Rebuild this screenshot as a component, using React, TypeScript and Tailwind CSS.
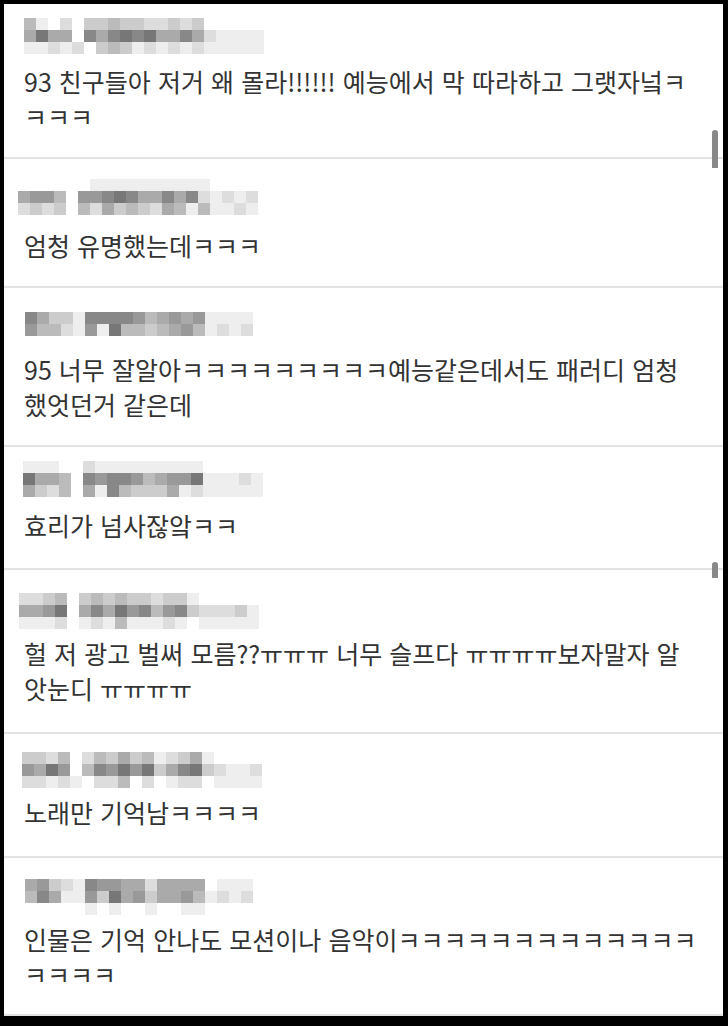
const GRAYS = [
  "#ffffff",
  "#eeeeee",
  "#dddddd",
  "#cccccc",
  "#bbbbbb",
  "#aaaaaa",
  "#999999",
  "#888888",
  "#777777",
  "#666666",
];

type Comment = {
  id: number;
  x: number;
  rows: string[];
  lines: string[];
  wrap: string;
  gap: string;
};

const comments: Comment[] = [
  {
    id: 1,
    x: 20,
    rows: ["41020334332232300000", "58550757878557521111", "11212034312121211111"],
    lines: ["93 친구들아 저거 왜 몰라!!!!!! 예능에서 막 따라하고 그랫자넠ㅋ", "ㅋㅋㅋ"],
    wrap: "pt-[14px] pb-[23px]",
    gap: "mt-[10px]",
  },
  {
    id: 2,
    x: 14,
    rows: ["00000011111111110000", "56640667875575721212", "23230425343254141121"],
    lines: ["엄청 유명했는데ㅋㅋㅋ"],
    wrap: "pt-[20px] pb-[23px]",
    gap: "mt-[13px]",
  },
  {
    id: 3,
    x: 21,
    rows: ["0000000000000000000", "7533177776456561111", "6442161844345641212"],
    lines: ["95 너무 잘알아ㅋㅋㅋㅋㅋㅋㅋㅋㅋ예능같은데서도 패러디 엄청", "했엇던거 같은데"],
    wrap: "pt-[12px] pb-[23px]",
    gap: "mt-[16px]",
  },
  {
    id: 4,
    x: 19,
    rows: ["11100211111111100000", "85540767764566811121", "53240517433351211111"],
    lines: ["효리가 넘사잖앜ㅋㅋ"],
    wrap: "pt-[14px] pb-[25px]",
    gap: "mt-[11px]",
  },
  {
    id: 5,
    x: 15,
    rows: ["22340343433233100000", "55680575867467322231", "11120121411121011111"],
    lines: ["헐 저 광고 벌써 모름??ㅠㅠㅠ 너무 슬프다 ㅠㅠㅠㅠ보자말자 알", "앗눈디 ㅠㅠㅠㅠ"],
    wrap: "pt-[23px] pb-[26px]",
    gap: "mt-[7px]",
  },
  {
    id: 6,
    x: 18,
    rows: ["33240243534123510000", "65860476868357832112", "22121022402012201111"],
    lines: ["노래만 기억남ㅋㅋㅋㅋ"],
    wrap: "pt-[18px] pb-[26px]",
    gap: "mt-[7px]",
  },
  {
    id: 7,
    x: 21,
    rows: ["5632176655255550111", "4751163856355641212", "0000010100100110000"],
    lines: ["인물은 기억 안나도 모션이나 음악이ㅋㅋㅋㅋㅋㅋㅋㅋㅋㅋㅋㅋㅋ", "ㅋㅋㅋㅋ"],
    wrap: "pt-[21px] pb-[22px]",
    gap: "mt-[7px]",
  },
];

function BlurredName({ x, rows }: { x: number; rows: string[] }) {
  return (
    <div className="flex flex-col" style={{ marginLeft: x }}>
      {rows.map((row, r) => (
        <div key={r} className="flex h-[12px]">
          {row.split("").map((c, i) => (
            <span key={i} className="h-[12px] w-[12px]" style={{ backgroundColor: GRAYS[Number(c)] }} />
          ))}
        </div>
      ))}
    </div>
  );
}

export default function App() {
  return (
    <div className="h-[1026px] w-[728px] overflow-hidden bg-black pt-[4px] pr-[5px] pb-[10px] pl-[4px]">
      <div
        className="relative h-[1012px] overflow-hidden bg-white text-[#333333]"
        style={{ fontFamily: '"Noto Sans CJK KR", "Noto Sans", sans-serif' }}
      >
        <ul className="flex list-none flex-col p-0">
          {comments.map((c) => (
            <li key={c.id} className={`border-b-2 border-[#e2e2e2] ${c.wrap}`}>
              <BlurredName x={c.x} rows={c.rows} />
              <p
                className={`${c.gap} whitespace-nowrap pl-[20px] text-[25px] leading-[35px] [word-spacing:1.5px]`}
              >
                {c.lines.map((l, i) => (
                  <span key={i} className="block">
                    {l}
                  </span>
                ))}
              </p>
            </li>
          ))}
        </ul>
        <span className="absolute top-[126px] left-[708px] h-[38px] w-[6px] rounded-t-full bg-[#888888]" />
        <span className="absolute top-[558px] left-[708px] h-[16px] w-[6px] rounded-t-full bg-[#888888]" />
      </div>
    </div>
  );
}
